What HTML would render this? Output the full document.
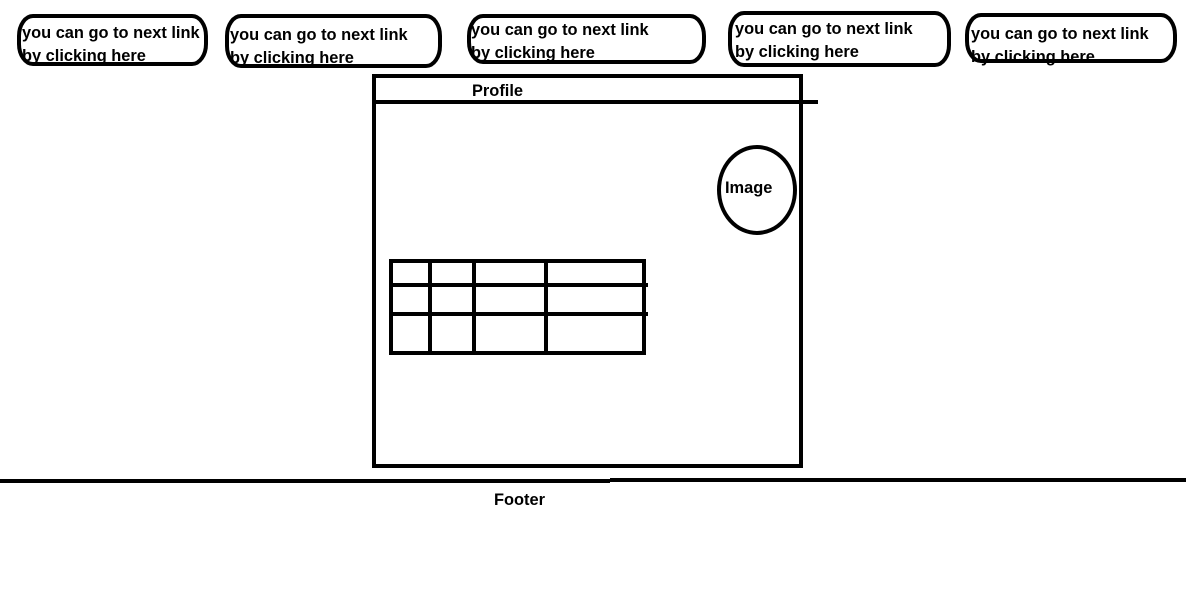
<!DOCTYPE html>
<html><head><meta charset="utf-8"><style>
html,body{margin:0;padding:0;background:#fff;width:1186px;height:604px;overflow:hidden}
svg{display:block}
text{font-family:"Liberation Sans",sans-serif;font-weight:bold;font-size:16.4px;fill:#000}
</style></head><body>
<svg width="1186" height="604" viewBox="0 0 1186 604" xmlns="http://www.w3.org/2000/svg">
<g fill="none" stroke="#000" stroke-width="4">
<rect x="19" y="16" width="187" height="48" rx="14" ry="20"/>
<rect x="227" y="16" width="213" height="50" rx="14" ry="20"/>
<rect x="469" y="16" width="235" height="46" rx="14" ry="20"/>
<rect x="730" y="13" width="219" height="52" rx="14" ry="20"/>
<rect x="967" y="15" width="208" height="46" rx="14" ry="20"/>
<rect x="374" y="76" width="427" height="390"/>
<line x1="374" y1="102" x2="818" y2="102"/>
<ellipse cx="757" cy="190" rx="38" ry="43"/>
<rect x="391" y="261" width="253" height="92"/>
<line x1="391" y1="285" x2="648" y2="285"/>
<line x1="391" y1="314" x2="648" y2="314"/>
<line x1="430" y1="261" x2="430" y2="355"/>
<line x1="474" y1="261" x2="474" y2="355"/>
<line x1="546" y1="261" x2="546" y2="353"/>
<line x1="0" y1="481" x2="610" y2="481"/>
<line x1="610" y1="480" x2="1186" y2="480"/>
</g>
<text x="22" y="38">you can go to next link</text>
<text x="22" y="61">by clicking here</text>
<text x="230" y="40">you can go to next link</text>
<text x="230" y="63">by clicking here</text>
<text x="471" y="35">you can go to next link</text>
<text x="471" y="58">by clicking here</text>
<text x="735" y="34">you can go to next link</text>
<text x="735" y="57">by clicking here</text>
<text x="971" y="39">you can go to next link</text>
<text x="971" y="62">by clicking here</text>
<text x="472" y="96">Profile</text>
<text x="725" y="193">Image</text>
<text x="494" y="505">Footer</text>
</svg>
</body></html>
